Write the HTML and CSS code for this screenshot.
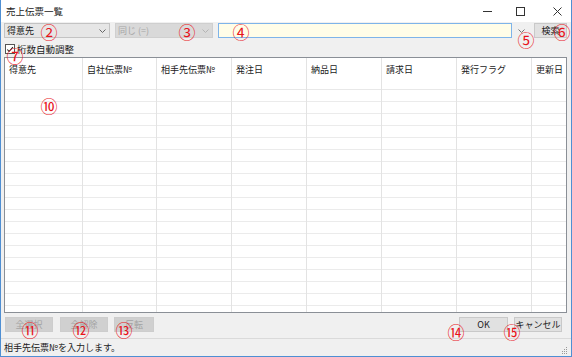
FILE: index.html
```html
<!DOCTYPE html>
<html lang="ja">
<head>
    <meta charset="UTF-8">
    <title>売上伝票一覧</title>
    <link rel="stylesheet" href="styles.css">
</head>
<body>

<div class="window">
    <div class="titlebar">
        <span class="title">売上伝票一覧</span>
        <span class="caption-btns">
            <svg class="cap-min" width="9" height="9" viewBox="0 0 9 9"><path d="M0 4.5H9" stroke="#333" stroke-width="1"/></svg>
            <svg class="cap-max" width="9" height="9" viewBox="0 0 9 9"><rect x="0.5" y="0.5" width="8" height="8" fill="none" stroke="#333" stroke-width="1"/></svg>
            <svg class="cap-close" width="9" height="9" viewBox="0 0 9 9"><path d="M0.5 0.5L8.5 8.5M8.5 0.5L0.5 8.5" stroke="#333" stroke-width="1"/></svg>
        </span>
    </div>

    <div class="toolbar">
        <div class="combo combo-field">
            <span>得意先</span>
            <svg width="7" height="4" viewBox="0 0 7 4"><path d="M0.5 0.5L3.5 3.5L6.5 0.5" fill="none" stroke="#666" stroke-width="1"/></svg>
        </div>
        <div class="combo combo-op disabled">
            <span>同じ (=)</span>
            <svg width="7" height="4" viewBox="0 0 7 4"><path d="M0.5 0.5L3.5 3.5L6.5 0.5" fill="none" stroke="#b4b4b4" stroke-width="1"/></svg>
        </div>
        <div class="textbox"></div>
        <div class="drop-btn">
            <svg width="7" height="4" viewBox="0 0 7 4"><path d="M0.5 0.5L3.5 3.5L6.5 0.5" fill="none" stroke="#777" stroke-width="1"/></svg>
        </div>
        <div class="btn btn-search">検索</div>
    </div>

    <div class="checkrow">
        <span class="checkbox">
            <svg width="9" height="9" viewBox="0 0 9 9"><path d="M1.5 4.5L3.5 6.8L7.8 1.8" fill="none" stroke="#222" stroke-width="1.2"/></svg>
        </span>
        <span class="check-label">桁数自動調整</span>
    </div>

    <div class="grid">
        <div class="col c1"><div class="head">得意先</div><div class="rows"></div></div>
        <div class="col c2"><div class="head">自社伝票№</div><div class="rows"></div></div>
        <div class="col c3"><div class="head">相手先伝票№</div><div class="rows"></div></div>
        <div class="col c4"><div class="head">発注日</div><div class="rows"></div></div>
        <div class="col c5"><div class="head">納品日</div><div class="rows"></div></div>
        <div class="col c6"><div class="head">請求日</div><div class="rows"></div></div>
        <div class="col c7"><div class="head">発行フラグ</div><div class="rows"></div></div>
        <div class="col c8"><div class="head">更新日</div><div class="rows"></div></div>
    </div>

    <div class="buttons">
        <div class="btn disabled b-all">全選択</div>
        <div class="btn disabled b-none">全解除</div>
        <div class="btn disabled b-inv">反転</div>
        <div class="spacer"></div>
        <div class="btn b-ok">OK</div>
        <div class="btn b-cancel">キャンセル</div>
    </div>

    <div class="statusbar">
        <span>相手先伝票№を入力します。</span>
        <svg class="grip" width="7" height="7" viewBox="0 0 7 7">
            <rect x="5" y="0" width="1" height="1" fill="#999"/>
            <rect x="3" y="2" width="1" height="1" fill="#999"/>
            <rect x="5" y="2" width="1" height="1" fill="#999"/>
            <rect x="1" y="4" width="1" height="1" fill="#999"/>
            <rect x="3" y="4" width="1" height="1" fill="#999"/>
            <rect x="5" y="4" width="1" height="1" fill="#999"/>
            <rect x="1" y="6" width="1" height="1" fill="#999"/>
            <rect x="3" y="6" width="1" height="1" fill="#999"/>
            <rect x="5" y="6" width="1" height="1" fill="#999"/>
        </svg>
    </div>

    <!-- annotation marks -->
    <span class="mark n2">②</span>
    <span class="mark n3">③</span>
    <span class="mark n4">④</span>
    <span class="mark n5">⑤</span>
    <span class="mark n6">⑥</span>
    <span class="mark n7">⑦</span>
    <span class="mark n10">⑩</span>
    <span class="mark n11">⑪</span>
    <span class="mark n12">⑫</span>
    <span class="mark n13">⑬</span>
    <span class="mark n14">⑭</span>
    <span class="mark n15">⑮</span>
</div>

</body>
</html>
```

FILE: styles.css
```css
html, body, div, span {
    margin: 0;
    padding: 0;
}
body {
    background-color: #ffffff;
    font-family: "Noto Sans CJK JP", "Liberation Sans", sans-serif;
    font-size: 9px;
    color: #1a1a1a;
}
.window {
    width: 572px;
    height: 357px;
    box-sizing: border-box;
    border: 1px solid #4f8fd3;
    border-top: none;
    background-color: #f0f0f0;
    display: flex;
    flex-direction: column;
    position: relative;
    overflow: hidden;
}

/* title bar */
.titlebar {
    height: 22px;
    flex: none;
    background-color: #ffffff;
    display: flex;
    align-items: center;
    padding-left: 5px;
}
.title {
    font-size: 9.5px;
    color: #222;
}
.caption-btns {
    margin-left: auto;
    display: flex;
    align-items: center;
    padding-right: 9px;
}
.cap-max {
    margin-left: 24px;
}
.cap-close {
    margin-left: 28px;
}

/* toolbar */
.toolbar {
    height: 17px;
    flex: none;
    box-sizing: border-box;
    padding: 1px 0 0 3px;
    display: flex;
    align-items: flex-start;
}
.combo {
    height: 15px;
    box-sizing: border-box;
    border: 1px solid #c3c3c3;
    background-color: #e6e6e6;
    display: flex;
    align-items: center;
    justify-content: space-between;
    padding: 0 3px 0 2px;
}
.combo-field {
    width: 106px;
}
.combo-op {
    width: 98px;
    margin-left: 5px;
}
.combo.disabled {
    background-color: #d9d9d9;
    border-color: #cfcfcf;
    color: #a6a6a6;
}
.textbox {
    width: 294px;
    height: 15px;
    box-sizing: border-box;
    margin-left: 5px;
    border: 1px solid #7eb4ea;
    background-color: #fffde8;
}
.drop-btn {
    width: 12px;
    height: 15px;
    margin-left: 3px;
    display: flex;
    align-items: center;
    justify-content: center;
}
.btn {
    height: 15px;
    box-sizing: border-box;
    border: 1px solid #c9c9c9;
    background-color: #e1e1e1;
    display: flex;
    align-items: center;
    justify-content: center;
    color: #222;
}
.btn.disabled {
    background-color: #d0d0d0;
    border-color: #cdcdcd;
    color: #a3a3a3;
}
.btn-search {
    width: 33px;
    margin-left: 7px;
}

/* checkbox row */
.checkrow {
    height: 18px;
    flex: none;
    box-sizing: border-box;
    padding: 2px 0 0 4px;
    display: flex;
    align-items: center;
}
.checkbox {
    width: 10px;
    height: 10px;
    box-sizing: border-box;
    border: 1px solid #555;
    background-color: #fff;
    display: flex;
    align-items: center;
    justify-content: center;
}
.check-label {
    margin-left: 2px;
    font-size: 9.5px;
}

/* list grid */
.grid {
    flex: 1;
    margin: 0 3px 0 3px;
    width: 563px;
    box-sizing: border-box;
    border: 1px solid #8a8f96;
    background-color: #ffffff;
    display: flex;
    overflow: hidden;
}
.col {
    display: flex;
    flex-direction: column;
    box-sizing: border-box;
    border-right: 1px solid #e3e3e3;
    flex: none;
}
.c1 { width: 78px; }
.c2 { width: 74px; }
.c3, .c4, .c5, .c6, .c7 { width: 75px; }
.c8 { flex: 1; border-right: none; }
.head {
    height: 32px;
    box-sizing: border-box;
    border-bottom: 1px solid #e8e8e8;
    padding: 6px 0 0 4px;
    white-space: nowrap;
    line-height: 12px;
}
.rows {
    flex: 1;
    background: repeating-linear-gradient(to bottom, transparent 0, transparent 11px, #ebebeb 11px, #ebebeb 12px);
}

/* bottom buttons */
.buttons {
    height: 25px;
    flex: none;
    box-sizing: border-box;
    padding: 4px 9px 0 4px;
    display: flex;
    align-items: flex-start;
}
.b-all, .b-none {
    width: 48px;
}
.b-none {
    margin-left: 7px;
}
.b-inv {
    width: 40px;
    margin-left: 6px;
}
.spacer {
    flex: 1;
}
.b-ok {
    width: 49px;
}
.b-cancel {
    width: 48px;
    margin-left: 6px;
}

/* status bar */
.statusbar {
    height: 18px;
    flex: none;
    box-sizing: border-box;
    border-top: 1px solid #dadada;
    padding: 0 3px 0 3px;
    display: flex;
    align-items: center;
    justify-content: space-between;
}
.grip {
    align-self: flex-end;
    margin-bottom: 2px;
}

/* red annotation marks */
.mark {
    position: absolute;
    font-size: 17px;
    line-height: 17px;
    color: #e8141c;
    transform: translate(-50%, -50%);
}
.n2 { left: 48px; top: 31px; }
.n3 { left: 186px; top: 31px; }
.n4 { left: 240px; top: 31px; }
.n5 { left: 525px; top: 39px; }
.n6 { left: 561px; top: 31px; }
.n7 { left: 14px; top: 55px; }
.n10 { left: 48px; top: 105px; }
.n11 { left: 29px; top: 329px; }
.n12 { left: 80px; top: 329px; }
.n13 { left: 123px; top: 329px; }
.n14 { left: 455px; top: 331px; }
.n15 { left: 511px; top: 331px; }
```
